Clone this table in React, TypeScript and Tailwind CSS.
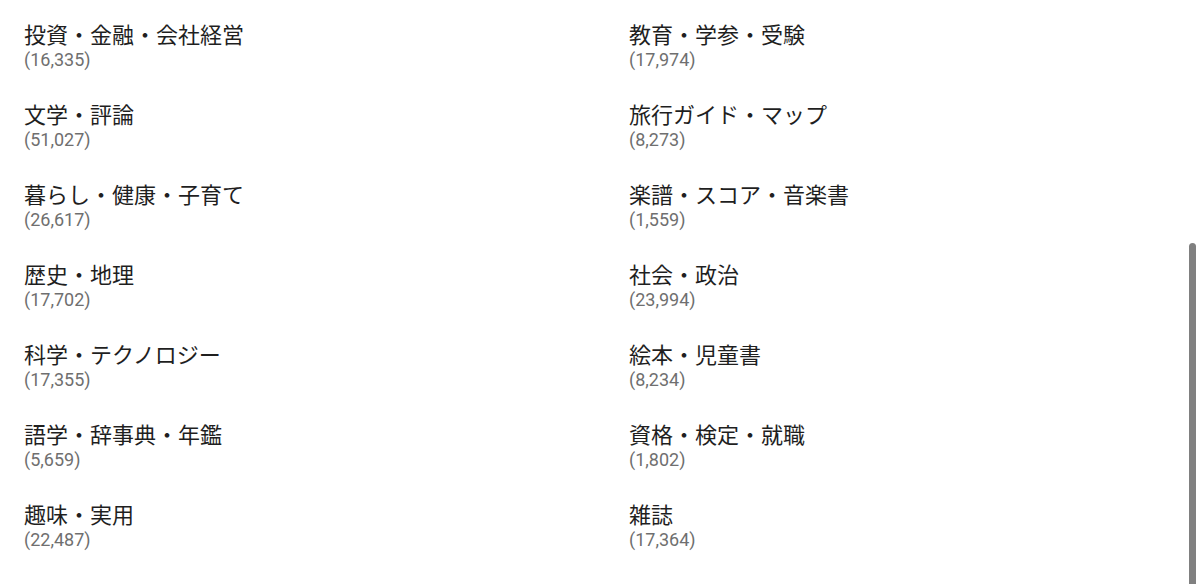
import React from "react";

interface Category {
  name: string;
  count: string;
}

const left: Category[] = [
  { name: "投資・金融・会社経営", count: "(16,335)" },
  { name: "文学・評論", count: "(51,027)" },
  { name: "暮らし・健康・子育て", count: "(26,617)" },
  { name: "歴史・地理", count: "(17,702)" },
  { name: "科学・テクノロジー", count: "(17,355)" },
  { name: "語学・辞事典・年鑑", count: "(5,659)" },
  { name: "趣味・実用", count: "(22,487)" },
];

const right: Category[] = [
  { name: "教育・学参・受験", count: "(17,974)" },
  { name: "旅行ガイド・マップ", count: "(8,273)" },
  { name: "楽譜・スコア・音楽書", count: "(1,559)" },
  { name: "社会・政治", count: "(23,994)" },
  { name: "絵本・児童書", count: "(8,234)" },
  { name: "資格・検定・就職", count: "(1,802)" },
  { name: "雑誌", count: "(17,364)" },
];

const CategoryItem: React.FC<{ item: Category }> = ({ item }) => (
  <div className="h-20 pt-[21px]">
    <div className="text-[22px] leading-[26px] text-[#1f1f1f]">{item.name}</div>
    <div
      className="mt-[3px] text-[18px] leading-[20px] text-[#6f6f6f]"
      style={{ fontFamily: "Roboto, sans-serif" }}
    >
      {item.count}
    </div>
  </div>
);

export default function App() {
  return (
    <div
      className="relative h-[584px] w-[1200px] overflow-hidden bg-white"
      style={{ fontFamily: '"Noto Sans", "Noto Sans CJK JP", sans-serif' }}
    >
      <div className="grid grid-cols-[605px_1fr] pl-6">
        <div className="flex flex-col">
          {left.map((c) => (
            <CategoryItem key={c.name} item={c} />
          ))}
        </div>
        <div className="flex flex-col">
          {right.map((c) => (
            <CategoryItem key={c.name} item={c} />
          ))}
        </div>
      </div>
      <div className="absolute right-[4px] top-[243px] h-[360px] w-[7px] rounded-full bg-[#808080]" />
    </div>
  );
}
